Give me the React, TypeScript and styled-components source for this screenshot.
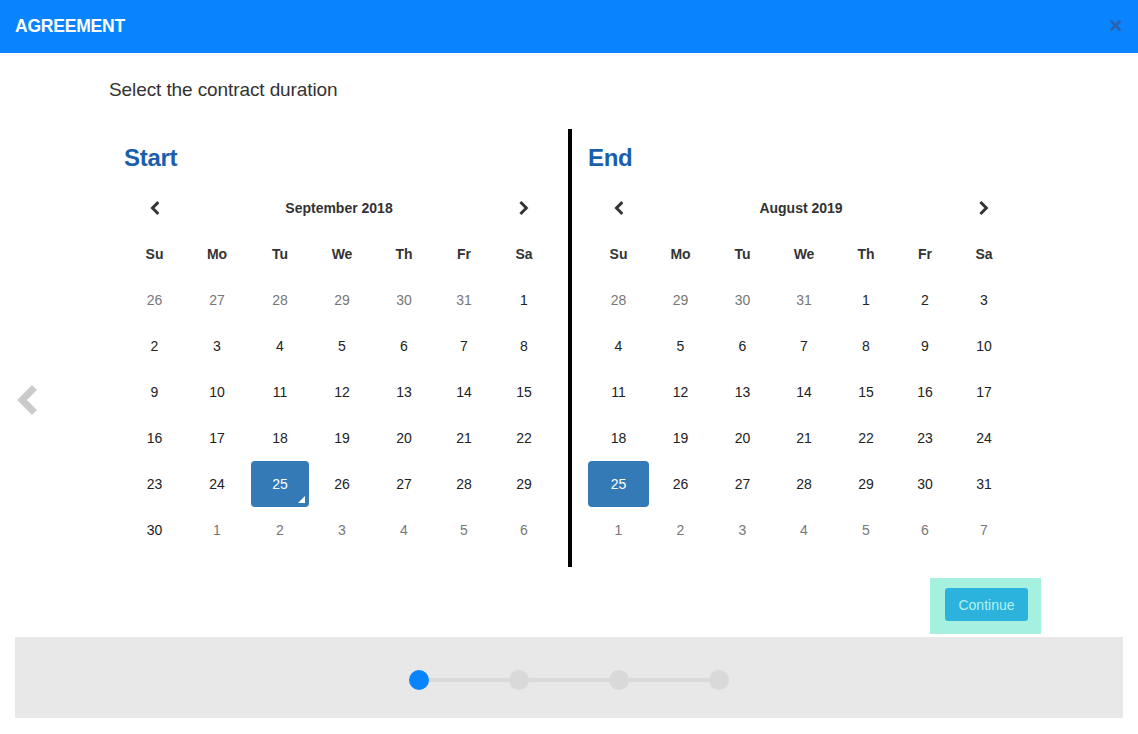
import React from "react";
import styled, { createGlobalStyle } from "styled-components";

const Global = createGlobalStyle`
  html, body { margin: 0; padding: 0; background: #fff; }
  body { font-family: "Liberation Sans", Arial, Helvetica, sans-serif; color: #333; }
`;

const Page = styled.div`
  width: 1138px;
  height: 734px;
  position: relative;
  overflow: hidden;
`;

const Header = styled.header`
  height: 53px;
  background: #0a84fe;
  display: flex;
  align-items: center;
  justify-content: space-between;
  padding: 0 16px 0 15px;
  box-sizing: border-box;
`;

const HeaderTitle = styled.h1`
  margin: 0;
  font-size: 17.5px;
  font-weight: 700;
  color: #fff;
  letter-spacing: -0.2px;
`;

const CloseBtn = styled.button`
  border: 0;
  background: transparent;
  padding: 0;
  width: 14px;
  height: 14px;
  display: flex;
  align-items: center;
  justify-content: center;
  margin-bottom: 3px;
`;

const Prompt = styled.p`
  margin: 27px 0 0 109px;
  font-size: 19px;
  line-height: 20px;
  color: #333;
  letter-spacing: -0.1px;
`;

const Carousel = styled.div`
  position: relative;
`;

const SideArrow = styled.button`
  position: absolute;
  left: 16px;
  top: 256px;
  border: 0;
  background: transparent;
  padding: 0;
  width: 24px;
  height: 32px;
`;

const CalRow = styled.div`
  display: flex;
  align-items: stretch;
  margin-top: 29px;
  padding-left: 124px;
`;

const Divider = styled.div`
  width: 4px;
  height: 438px;
  background: #000;
  margin: 0 16px 0 13px;
`;

const Calendar = styled.section`
  display: flex;
  flex-direction: column;
`;

const CalTitle = styled.h2`
  margin: 17px 0 0;
  font-size: 24px;
  line-height: 24px;
  font-weight: 700;
  color: #1a5fad;
  letter-spacing: -0.3px;
`;

const Grid = styled.div<{ $cols: string }>`
  display: grid;
  grid-template-columns: ${(p) => p.$cols};
  grid-auto-rows: 46px;
  margin-top: 15px;
`;

const NavCell = styled.div`
  display: flex;
  align-items: center;
  justify-content: center;
`;

const MonthCell = styled.div`
  grid-column: 2 / span 5;
  display: flex;
  align-items: center;
  justify-content: center;
  font-size: 14px;
  font-weight: 700;
  color: #333;
`;

const Dow = styled.div`
  display: flex;
  align-items: center;
  justify-content: center;
  font-size: 14px;
  font-weight: 700;
  color: #333;
`;

const Day = styled.div<{ $muted?: boolean; $active?: boolean; $today?: boolean; $inset?: number }>`
  position: relative;
  display: flex;
  align-items: center;
  justify-content: center;
  font-size: 14px;
  margin: 0 ${(p) => (p.$active ? p.$inset ?? 0 : 0)}px;
  color: ${(p) => (p.$active ? "#fff" : p.$muted ? "#777" : "#222")};
  background: ${(p) => (p.$active ? "#337ab7" : "transparent")};
  border-radius: 4px;
  ${(p) =>
    p.$today
      ? `&::after {
    content: "";
    position: absolute;
    right: 4px;
    bottom: 4px;
    border-style: solid;
    border-width: 0 0 7px 7px;
    border-color: transparent transparent #fff transparent;
  }`
      : ""}
`;

const ActionRow = styled.div`
  display: flex;
  justify-content: flex-end;
  margin: 11px 97px 0 0;
`;

const Highlight = styled.div`
  background: #a6f0e0;
  padding: 10px 13px 13px 15px;
`;

const ContinueBtn = styled.button`
  width: 83px;
  height: 33px;
  border: 0;
  border-radius: 3px;
  background: #2bb3de;
  color: #b4f2ea;
  font-family: "Liberation Sans", Arial, sans-serif;
  font-size: 14px;
  padding: 0;
`;

const Footer = styled.footer`
  margin: 3px 15px 0;
  height: 81px;
  background: #e8e8e8;
  display: flex;
  justify-content: center;
  align-items: flex-start;
  padding-top: 33px;
  box-sizing: border-box;
`;

const Stepper = styled.div`
  display: flex;
  align-items: center;
`;

const Dot = styled.span<{ $active?: boolean }>`
  width: 20px;
  height: 20px;
  border-radius: 50%;
  background: ${(p) => (p.$active ? "#0a84fe" : "#d9d9d9")};
  flex: none;
`;

const Line = styled.span`
  width: 80px;
  height: 4px;
  background: #d9d9d9;
`;

const Chevron = ({ dir, size = 14, color = "#333", w = 3 }: { dir: "l" | "r"; size?: number; color?: string; w?: number }) => (
  <svg width={size * 0.7} height={size} viewBox="0 0 10 14">
    <polyline
      points={dir === "l" ? "7.5,2 2.5,7 7.5,12" : "2.5,2 7.5,7 2.5,12"}
      fill="none"
      stroke={color}
      strokeWidth={w}
      strokeLinecap="square"
      strokeLinejoin="miter"
    />
  </svg>
);

type Cell = { d: number; m?: boolean; a?: boolean; t?: boolean };

const DOW = ["Su", "Mo", "Tu", "We", "Th", "Fr", "Sa"];

const build = (prevStart: number, prevEnd: number, count: number, total: number): Cell[] => {
  const cells: Cell[] = [];
  for (let d = prevStart; d <= prevEnd; d++) cells.push({ d, m: true });
  for (let d = 1; d <= count; d++) cells.push({ d });
  let n = 1;
  while (cells.length < total) cells.push({ d: n++, m: true });
  return cells;
};

const startCells = build(26, 31, 30, 42).map((c) => (!c.m && c.d === 25 ? { ...c, a: true, t: true } : c));
const endCells = build(28, 31, 31, 42).map((c) => (!c.m && c.d === 25 ? { ...c, a: true } : c));

const Cal = ({ title, month, cols, cells, inset }: { title: string; month: string; cols: string; cells: Cell[]; inset: number }) => (
  <Calendar>
    <CalTitle>{title}</CalTitle>
    <Grid $cols={cols}>
      <NavCell>
        <Chevron dir="l" />
      </NavCell>
      <MonthCell>{month}</MonthCell>
      <NavCell>
        <Chevron dir="r" />
      </NavCell>
      {DOW.map((d) => (
        <Dow key={d}>{d}</Dow>
      ))}
      {cells.map((c, i) => (
        <Day key={i} $muted={c.m} $active={c.a} $today={c.t} $inset={inset}>
          {c.d}
        </Day>
      ))}
    </Grid>
  </Calendar>
);

export default function App() {
  return (
    <Page>
      <Global />
      <Header>
        <HeaderTitle>AGREEMENT</HeaderTitle>
        <CloseBtn aria-label="close">
          <svg width="11" height="11" viewBox="0 0 11 11">
            <path d="M1.5 1.5 L9.5 9.5 M9.5 1.5 L1.5 9.5" stroke="#2a62b0" strokeWidth="2.6" strokeLinecap="square" />
          </svg>
        </CloseBtn>
      </Header>
      <Prompt>Select the contract duration</Prompt>
      <Carousel>
        <SideArrow aria-label="previous">
          <svg width="24" height="32" viewBox="0 0 24 32">
            <polyline points="16,5 6,15 16,25" fill="none" stroke="#cbcbcb" strokeWidth="7" strokeLinecap="square" />
          </svg>
        </SideArrow>
        <CalRow>
          <Cal
            title="Start"
            month="September 2018"
            cols="61px 64px 62px 62px 62px 58px 62px"
            cells={startCells}
            inset={2}
          />
          <Divider />
          <Cal
            title="End"
            month="August 2019"
            cols="61px 63px 61px 62px 62px 56px 62px"
            cells={endCells}
            inset={0}
          />
        </CalRow>
      </Carousel>
      <ActionRow>
        <Highlight>
          <ContinueBtn>Continue</ContinueBtn>
        </Highlight>
      </ActionRow>
      <Footer>
        <Stepper>
          <Dot $active />
          <Line />
          <Dot />
          <Line />
          <Dot />
          <Line />
          <Dot />
        </Stepper>
      </Footer>
    </Page>
  );
}
